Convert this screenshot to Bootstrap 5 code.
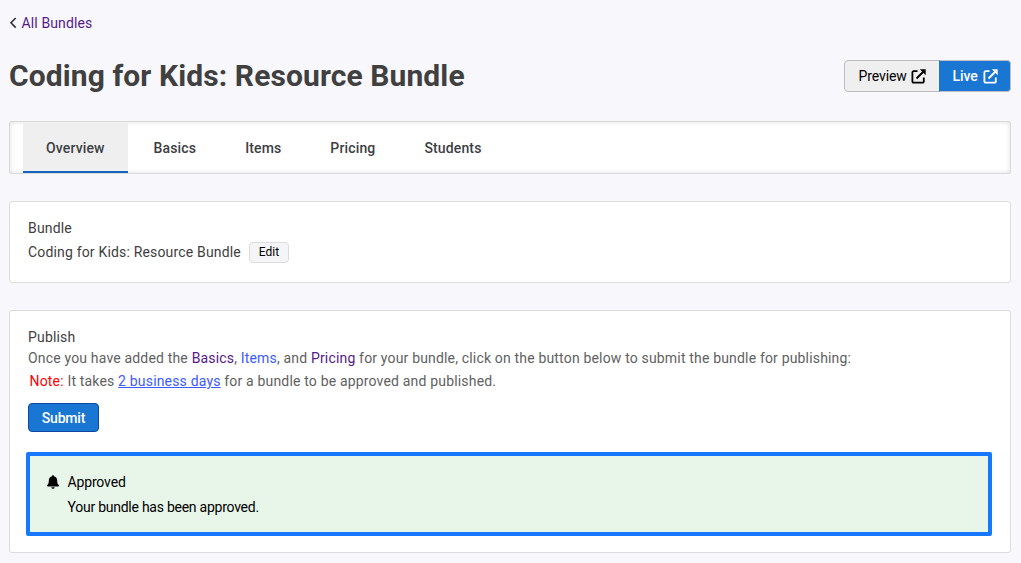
<!DOCTYPE html>
<html lang="en">
<head>
<meta charset="utf-8">
<meta name="viewport" content="width=device-width, initial-scale=1">
<title>Coding for Kids: Resource Bundle</title>
<link href="https://cdn.jsdelivr.net/npm/bootstrap@5.3.0/dist/css/bootstrap.min.css" rel="stylesheet">
<style>
body{background:#f8f7fc;color:#3c4043;font-family:Roboto,"Liberation Sans",sans-serif;font-size:14px;line-height:20px;overflow:hidden}
.page{padding:0 10px 0 9px}
a{text-decoration:none}
.visited{color:#551a8b}
.fresh{color:#3d5afe}
.back{height:20px;margin-top:13px;letter-spacing:.12px}
.back svg{margin-right:4.500px}
.heading{height:32px;margin-top:27px}
.heading h1{font-size:30px;font-weight:700;line-height:32px;color:#404040;letter-spacing:.1px}
.btn{font-size:14px;line-height:20px;--bs-btn-border-radius:4px}
.btn-preview,.btn-live{height:32px;padding:0 13px 0 13px}
.btn-preview{background:#efefef;border-color:#bdbdbd;color:#000;width:96px;letter-spacing:-.1px}
.btn-preview span{padding-left:.5px}
.btn-live{padding:0 12px 0 12.500px;background:#1976d2;border-color:#bdbdbd;border-left-color:#1976d2;color:#fff;width:72px;font-weight:500;letter-spacing:-.1px}
.tabs{height:53px;margin-top:29px;padding:0 13px;gap:3px;background:#fff;border:1px solid #d9dbd8;border-radius:2px;box-shadow:inset 0 0 5px #ddd}
.tabs .nav-link{padding:0 23px;line-height:53px;height:51px;color:#3c4043;font-weight:500;letter-spacing:.14px;border-radius:0}
.tabs .active{background:#efefef;border-bottom:2px solid #1565c0}
.panel{border:1px solid #dcdcda;border-radius:3px;color:#404040}
.panel-bundle{height:82px;margin-top:27px;padding:16px 18px}
.panel-publish{height:243px;margin-top:27px;padding:16px 18px}
.spaced{letter-spacing:.172px}
.bundle-name{height:21px;margin-top:4px}
.bundle-name span{padding-bottom:1px}
.btn-edit{font-size:12px;line-height:19px;height:21px;width:40px;padding:0;background:#f5f5f7;border-color:#dcdcdc;color:#000}
.dim{color:#616161}
.intro{margin-top:1px}
.note{margin:3px 0 0 1.500px;letter-spacing:.175px}
.btn-submit{width:71px;height:29px;margin-top:12px;padding:0;background:#1976d2;border-color:#0d47a1;color:#fff;font-weight:500;letter-spacing:-.2px}
.notice{margin:20px 0 0 -2px;width:966px;height:84px;border:4px solid #1677ff;border-radius:2px;background:#e8f5e9;color:#000;padding:14px 17px;gap:8.500px}
.notice svg{margin-top:5px}
.notice-text{line-height:25px;letter-spacing:-.25px}
.notice-title{letter-spacing:-.15px}
</style>
</head>
<body>
<main class="page">
  <div class="back d-flex align-items-center">
    <svg width="8" height="12" viewBox="0 0 8 12" fill="none" stroke="#333" stroke-width="1.6"><path d="M6.700 1 2 5.800l4.700 4.800"/></svg>
    <a class="visited" href="#">All Bundles</a>
  </div>
  <header class="heading d-flex justify-content-between align-items-center">
    <h1 class="m-0">Coding for Kids: Resource Bundle</h1>
    <div class="btn-group">
      <a class="btn btn-preview d-flex align-items-center justify-content-between" href="#"><span>Preview</span>
        <svg width="15" height="15" viewBox="0 0 15 15" fill="none" stroke="currentColor" stroke-width="1.8"><path d="M6.500 2.200H2.600A1.200 1.200 0 0 0 1.400 3.400v9A1.200 1.200 0 0 0 2.600 13.600h9a1.200 1.200 0 0 0 1.200-1.200V8.500M5.500 9.500l7-7"/><path d="M8.800.3h5.900v5.900z" fill="currentColor" stroke="none"/></svg></a>
      <a class="btn btn-live d-flex align-items-center justify-content-between" href="#"><span>Live</span>
        <svg width="15" height="15" viewBox="0 0 15 15" fill="none" stroke="currentColor" stroke-width="1.8"><path d="M6.500 2.200H2.600A1.200 1.200 0 0 0 1.400 3.400v9A1.200 1.200 0 0 0 2.600 13.600h9a1.200 1.200 0 0 0 1.200-1.200V8.500M5.500 9.500l7-7"/><path d="M8.800.3h5.900v5.900z" fill="currentColor" stroke="none"/></svg></a>
    </div>
  </header>
  <nav class="nav tabs flex-nowrap">
    <a class="nav-link active" href="#">Overview</a>
    <a class="nav-link" href="#">Basics</a>
    <a class="nav-link" href="#">Items</a>
    <a class="nav-link" href="#">Pricing</a>
    <a class="nav-link" href="#">Students</a>
  </nav>
  <section class="card panel panel-bundle">
    <div class="spaced">Bundle</div>
    <div class="bundle-name d-flex align-items-center spaced"><span>Coding for Kids: Resource Bundle</span>
      <button class="btn btn-edit ms-2" type="button">Edit</button></div>
  </section>
  <section class="card panel panel-publish">
    <div class="spaced">Publish</div>
    <div class="dim spaced intro">Once you have added the <a class="visited" href="#">Basics</a>, <a class="fresh" href="#">Items</a>, and <a class="visited" href="#">Pricing</a> for your bundle, click on the button below to submit the bundle for publishing:</div>
    <div class="dim note"><span class="note-label" style="color:red">Note:</span> It takes <a class="fresh text-decoration-underline" href="#">2 business days</a> for a bundle to be approved and published.</div>
    <button class="btn btn-submit" type="button">Submit</button>
    <div class="notice d-flex" role="status">
      <svg width="12" height="14" viewBox="0 0 12 14" class="flex-shrink-0"><path d="M5.200 1.200V.8a.8.8 0 0 1 1.600 0v.4C9 1.600 10.200 3.200 10.200 5.500c0 2.800.5 3.600 1.500 4.600.6.600.2 1.400-.6 1.400H.9c-.8 0-1.200-.8-.6-1.400 1-1 1.500-1.800 1.500-4.600 0-2.300 1.200-3.900 3.400-4.300zM4.300 12.300h3.400a1.700 1.500 0 0 1-3.400 0z"/></svg>
      <div class="notice-text"><div class="notice-title">Approved</div><div>Your bundle has been approved.</div></div>
    </div>
  </section>
</main>
<script src="https://cdn.jsdelivr.net/npm/bootstrap@5.3.0/dist/js/bootstrap.bundle.min.js"></script>
</body>
</html>
